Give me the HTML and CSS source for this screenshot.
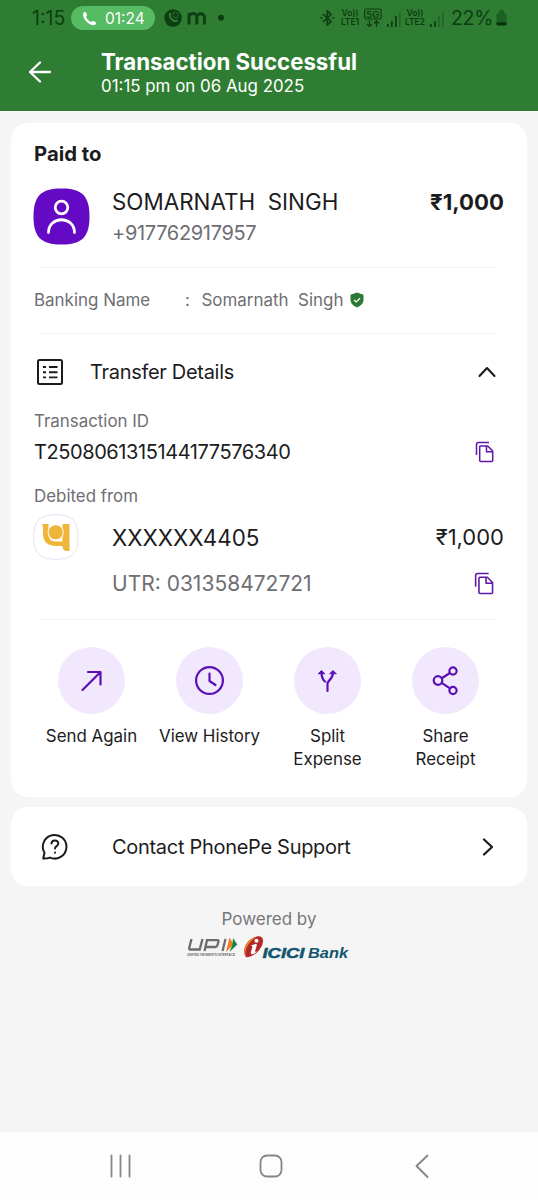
FILE: index.html
```html
<!DOCTYPE html>
<html lang="en">
<head>
<meta charset="utf-8">
<title>Transaction Successful</title>
<link rel="stylesheet" href="styles.css">
</head>
<body>
<header class="header">
  <div class="status">
    <span class="clock">1:15</span>
    <span class="call">
      <svg width="15" height="15" viewBox="0 0 15 15"><path d="M1 3.2C1 1.6 2.3.9 3.3 1c.8.1 1.6 2.5 1.7 3.3.1.7-1 1.1-.9 1.7C4.6 7.800 7.200 10.400 9 10.900c.6.1 1-1 1.700-.9.8.1 3.200 1 3.300 1.700.1 1.300-.9 2.500-2.300 2.500C6.700 14 1 8.200 1 3.200z" fill="#fff"/></svg>
      <span class="call-time">01:24</span>
    </span>
    <svg class="notif" width="62" height="20" viewBox="0 0 62 20" fill="none">
      <circle cx="9" cy="10" r="8.700" fill="#0d3d12"/>
      <path d="M5 5.500c1-1.200 2-.9 2.300.3.300 1-.8 1.300-.5 2.200.7 2 2.200 3.400 4 4 .9.200 1.200-.9 2-.5 1.200.5 1.600 1.300.5 2.200C9.500 16 3 9 5 5.500z" fill="#2e7d32"/>
      <path d="M9.500 4.500l1.500-1 1 1.200 1.500.2v1.500l1 1.100-1.200.9-.3 1.300-1.500-.2-1.400.5-.6-1.400-1-1 .8-1.200z" stroke="#2e7d32" stroke-width=".8"/>
      <path d="M25 16.500V5M25 9.500C25 4.500 32.800 4 32.800 9V16.500M32.800 9.500c0-5 7.700-5 7.700 0v7" stroke="#0d3d12" stroke-width="2.800"/>
      <circle cx="57" cy="9.800" r="3" fill="#0d3d12"/>
    </svg>
    <span class="system">
      <svg width="15" height="16" viewBox="0 0 15 16" fill="none" stroke="#0d3d12" stroke-width="1.700"><path d="M3 4l8 7.500L7.300 15V1L11 4.500 3 12"/><path d="M.5 8h2M12.300 8h2"/></svg>
      <span class="lte"><b>Vo))</b><b>LTE1</b></span>
      <svg class="fiveg" width="18" height="20" viewBox="0 0 18 20"><rect x=".7" y="1" width="16.400" height="10" rx="2" fill="none" stroke="#0d3d12" stroke-width="1.200"/><text x="8.900" y="9.500" text-anchor="middle" class="fiveg-text">5G</text><path d="M5.500 12.500v6M3 16L5.500 18.500 8 16M12.500 19v-6M10 15.500l2.500-2.500L15 15.500" fill="none" stroke="#0d3d12" stroke-width="1.300"/></svg>
      <svg class="bars" width="14" height="15" viewBox="0 0 14 15" fill="#0d3d12"><path d="M0 12h1.700v3H0zM4 9h1.700v6H4zM8 4h1.700v11H8z"/><path opacity=".35" d="M12 0h1.700v15H12z"/></svg>
      <span class="lte lte-two"><b>Vo))</b><b>LTE2</b></span>
      <svg class="bars" width="14" height="15" viewBox="0 0 14 15" fill="#0d3d12"><path d="M0 12h1.700v3H0zM4 9h1.700v6H4z"/><path opacity=".35" d="M8 4h1.700v11H8zM12 0h1.700v15H12z"/></svg>
      <span class="percent">22%</span>
      <svg width="11" height="16" viewBox="0 0 11 16"><path d="M.5 5Q.5 3 3 2.800V1q0-1 2.500-1T8 1v1.800q2.500.2 2.500 2.200v8H.500z" fill="#1d6023"/><path d="M.5 12.500h10V14q0 1.500-1.500 1.500H2Q.5 15.500.5 14z" fill="#072f0a"/></svg>
    </span>
  </div>
  <div class="titlebar">
    <svg width="24" height="24" viewBox="0 0 24 24" fill="none" stroke="#fff" stroke-width="2.300" stroke-linecap="round" stroke-linejoin="round"><path d="M12 2.500L2 12l10 9.500M2 12h20"/></svg>
    <div class="titles">
      <h1 class="title">Transaction Successful</h1>
      <p class="date">01:15 pm on 06 Aug 2025</p>
    </div>
  </div>
</header>

<main class="content">
  <section class="card">
    <h2 class="paid">Paid to</h2>
    <div class="payee">
      <svg class="avatar" width="57" height="57" viewBox="0 0 57 57"><path d="M28.500.5C49 .5 56.500 8 56.500 28.500S49 56.500 28.500 56.500.5 49 .5 28.500 8 .5 28.500.5z" fill="#650ac4"/><g fill="none" stroke="#fff" stroke-width="2.800" stroke-linecap="round"><circle cx="28.500" cy="19.500" r="6.300"/><path d="M15.500 44.500c0-17 26-17 26 0"/></g></svg>
      <div class="who">
        <span class="name">SOMARNATH  SINGH</span>
        <span class="phone">+917762917957</span>
      </div>
      <strong class="amount">₹1,000</strong>
    </div>
    <div class="banking">
      <span class="bank-label">Banking Name</span>
      <span class="colon">:</span>
      <span class="bank-name">Somarnath  Singh</span>
      <svg width="14" height="16" viewBox="0 0 14 16"><path d="M7 .5l6.500 2.300v5C13.500 11.500 10.500 14 7 15.500 3.500 14 .5 11.500.5 7.800v-5z" fill="#2a7a35"/><path d="M4 7.900l2.200 2 3.800-3.600" fill="none" stroke="#fff" stroke-width="1.300"/></svg>
    </div>
    <div class="details-head">
      <svg width="28" height="28" viewBox="0 0 28 28" fill="none" stroke="#1c1c1e" stroke-width="2"><rect x="2" y="2" width="24" height="24" rx="1.500"/><path d="M7 9h3M7 14.200h3M7 19.400h3M13 9h8.500M13 14.200h8.500M13 19.400h8.500" stroke-width="1.900"/></svg>
      <span class="details-title">Transfer Details</span>
      <svg class="chev" width="20" height="12" viewBox="0 0 20 12" fill="none" stroke="#1c1c1e" stroke-width="2.100" stroke-linecap="round" stroke-linejoin="round"><path d="M2.500 10L10 2l7.500 8"/></svg>
    </div>
    <div class="label txn-label">Transaction ID</div>
    <div class="txn">
      <span class="txn-id">T2508061315144177576340</span>
      <svg class="copy" width="20" height="22" viewBox="0 0 20 22" fill="none" stroke="#6016a8" stroke-width="1.500" stroke-linejoin="round"><path d="M14 1.500H3.500q-2 0-2 2V14"/><path d="M5.500 5h7.200l5 5v9.500q0 1-1 1h-11q-1 0-1-1V6q0-1 .8-1zM11.500 5v5.700h6"/></svg>
    </div>
    <div class="label debit-label">Debited from</div>
    <div class="debit">
      <svg width="46" height="46" viewBox="0 0 46 46"><path d="M23 .7C39 .7 45 7 45 23s-6 22.300-22 22.300S.7 39 .7 23 7 .7 23 .7z" fill="#fff" stroke="#e7dcef"/><path d="M9 10h6.500v10c0 5 2.500 7.500 7.500 7.500h6.500V10h7v27H34c-3 0-4.500-1.500-4.500-5H23C14 32 10 27 10 20v-5.500c0-2-.2-3.300-1-4.500z" fill="#efb539"/><circle cx="22.700" cy="18.300" r="7.600" fill="#efb539" stroke="#fff" stroke-width="1"/></svg>
      <span class="account">XXXXXX4405</span>
      <span class="debit-amount">₹1,000</span>
    </div>
    <div class="utr">
      <span class="utr-id">UTR: 031358472721</span>
      <svg class="copy" width="21" height="23" viewBox="0 0 20 22" fill="none" stroke="#6016a8" stroke-width="1.500" stroke-linejoin="round"><path d="M14 1.500H3.500q-2 0-2 2V14"/><path d="M5.500 5h7.200l5 5v9.500q0 1-1 1h-11q-1 0-1-1V6q0-1 .8-1zM11.500 5v5.700h6"/></svg>
    </div>
    <div class="actions">
      <div class="action"><span class="circle"><svg width="34" height="34" viewBox="0 0 34 34"><path d="M8.500 26L26.500 8M14 8H26.500V20.500"/></svg></span><span class="caption">Send Again</span></div>
      <div class="action"><span class="circle"><svg width="34" height="34" viewBox="0 0 34 34"><circle cx="17.500" cy="16.500" r="13.400"/><path d="M17.500 9.500V17l6 4"/></svg></span><span class="caption">View History</span></div>
      <div class="action"><span class="circle"><svg width="34" height="34" viewBox="0 0 34 34"><path d="M17.500 27v-7.500c0-3 5.500-4 5.500-11M15 17.500c-2.500-2-3.500-4-3.500-9"/><path class="solid" d="M8.500 9.500l3-3 3 3zM20 9.500l3-3 3 3z"/></svg></span><span class="caption">Split<br>Expense</span></div>
      <div class="action"><span class="circle"><svg width="34" height="34" viewBox="0 0 34 34"><circle cx="10" cy="16.500" r="4.300"/><circle cx="25" cy="7" r="3.600"/><circle cx="25" cy="26.500" r="3.600"/><path d="M13.700 14.200l8.200-5.200M13.700 18.900l8.200 5.400"/></svg></span><span class="caption">Share<br>Receipt</span></div>
    </div>
  </section>

  <section class="card support">
    <svg width="28" height="28" viewBox="0 0 28 28" fill="none" stroke="#1c1c1e" stroke-width="2" stroke-linecap="round" stroke-linejoin="round"><path d="M2.200 25.500L3.500 19.800A11.800 11.800 0 1 1 9 24.600Q6 25.600 2.200 25.500z"/><path d="M10.500 10.500c.2-4.300 7-4 6.800 0 0 2.800-3.300 2.500-3.300 5M14 19.500v.2"/></svg>
    <span class="support-text">Contact PhonePe Support</span>
    <svg class="chev-right" width="12" height="20" viewBox="0 0 12 20" fill="none" stroke="#1c1c1e" stroke-width="2.300" stroke-linecap="round" stroke-linejoin="round"><path d="M2 2.500l8 7.500-8 7.500"/></svg>
  </section>

  <footer class="powered">
    <span class="powered-text">Powered by</span>
    <svg width="164" height="28" viewBox="0 0 164 28">
      <g fill="none" stroke="#6c6c70" stroke-width="2.300"><path d="M4.500 4L2.200 13q-.3 1.500 1 1.500h9.500L15.500 4"/><path d="M17.500 16L20 5.200h10.500q1.500 0 1 1.500L30.300 10.500q-.4 1.500-2 1.500H19"/><path d="M38.500 4L35.500 16"/></g>
      <path d="M42.500 2.500l4.300 7-7.800 7.500z" fill="#ef7d27"/><path d="M46 3l4.300 6.500-7.800 7.500 3-7.500z" fill="#168447"/>
      <text x="0" y="20.600" class="upi-sub" textLength="48" lengthAdjust="spacingAndGlyphs">UNIFIED PAYMENTS INTERFACE</text>
      <path d="M59 22C54.500 16 59 4 70 1.500c7.500-1.200 7.500 6 3 12.500-4 5.500-10 9-14 8z" fill="#b3292a"/><path d="M59 22C54.500 16 59 4 70 1.500 60 8 57.500 15 59 22z" fill="#ef7d27"/>
      <circle cx="69.500" cy="5.800" r="2" fill="#fff"/><path d="M64 10.500q4-2 5.500-1.500c.8.500-.5 4-1.500 7.500 0 1 1 0 1.800-.2-2 3.200-6.300 4.200-6 1.200l1.700-6z" fill="#fff"/>
      <text x="75.500" y="23" class="icici" textLength="42" lengthAdjust="spacingAndGlyphs">ICICI</text>
      <text x="121" y="23" class="icici bank" textLength="40" lengthAdjust="spacingAndGlyphs">Bank</text>
    </svg>
  </footer>
</main>

<nav class="nav">
  <svg width="24" height="24" viewBox="0 0 24 24"><path d="M2.500 1.500v21M11.500 1.500v21M20.500 1.500v21"/></svg>
  <svg width="24" height="24" viewBox="0 0 24 24"><rect x="1.500" y="1.500" width="21" height="21" rx="6.500"/></svg>
  <svg width="24" height="24" viewBox="0 0 24 24"><path d="M17.500 1.500L6.500 12l11 11"/></svg>
</nav>
</body>
</html>
```
FILE: styles.css
```css
* { box-sizing: border-box; }
body { margin: 0; width: 538px; height: 1200px; display: flex; flex-direction: column; background: #f5f5f5; color: #1c1c1e; font-family: Inter, "Noto Sans", sans-serif; overflow: hidden; }
h1, h2, p { margin: 0; }
svg { display: block; flex: none; }
span { white-space: pre; }

.header { height: 111px; background: #2e7d32; flex: none; }
.status { height: 36px; display: flex; align-items: center; padding-left: 32px; color: #0d3d12; }
.clock { width: 39px; font-size: 19.500px; }
.call { display: flex; align-items: center; gap: 8px; width: 84px; height: 24px; padding-left: 11px; border-radius: 12px; background: #57bb63; color: #fff; }
.call-time { font-size: 15.500px; }
.notif { margin-left: 9px; }
.system { display: flex; align-items: center; margin-left: auto; padding-right: 31px; }
.system > svg:first-child { margin-right: 3px; }
.lte { display: grid; justify-content: center; width: 20px; margin-left: 2px; line-height: 9px; font-size: 8.700px; text-align: center; letter-spacing: -.2px; }
.lte-two { margin-left: 4px; }
.lte b { font-weight: 600; }
.fiveg { margin-left: 4px; }
.fiveg-text { font: 600 9.500px Inter, sans-serif; fill: #0d3d12; }
.bars { margin: 2px 0 0 5px; }
.percent { margin: 0 3px 0 7px; font-size: 19.500px; letter-spacing: -.3px; }
.titlebar { display: flex; padding: 13px 0 0 28px; }
.titlebar > svg { margin-top: 11px; }
.titles { margin-left: 49px; }
.title { font-size: 22.250px; line-height: 26px; font-weight: 700; color: #fff; white-space: nowrap; }
.date { font-size: 16.900px; line-height: 22px; color: #fff; white-space: nowrap; }

.content { flex: 1; padding: 12px 11px 0; }
.card { background: #fff; border-radius: 17px; padding: 0 23px; }
.paid { padding-top: 18px; font-size: 20.300px; line-height: 26px; font-weight: 700; }
.payee { display: flex; margin-top: 21px; height: 57px; }
.avatar { margin-left: -1px; }
.who { display: grid; margin: -2px 0 0 22px; grid-template-rows: 32px 30px; line-height: 31px; }
.name { font-size: 22.400px; }
.phone { font-size: 20px; letter-spacing: -.33px; color: #6e6e73; }
.amount { margin: -2px 0 0 auto; font-size: 22.200px; line-height: 31px; font-weight: 700; }
.banking { display: flex; align-items: center; height: 67px; margin-top: 22px; padding-bottom: 2px; border-block: 1px solid #f3f3f3; margin-inline: 6px 8px; font-size: 16.950px; color: #6e6e73; }
.bank-label { margin-left: -6px; width: 151px; }
.colon { width: 16.500px; }
.banking > svg { margin-left: 6px; }
.details-head { display: flex; align-items: center; height: 76px; padding-left: 2px; }
.details-title { margin-left: 26px; font-size: 20px; letter-spacing: -.3px; }
.chev { margin-left: auto; margin-right: 7px; }
.label { margin-top: -1px; font-size: 16.900px; line-height: 24px; color: #6e6e73; }
.txn { display: flex; align-items: center; justify-content: space-between; height: 37px; }
.txn-id { font-size: 20px; letter-spacing: -.42px; }
.copy { margin-right: 9px; }
.debit-label { margin-top: 14px; }
.debit { display: flex; align-items: center; height: 46px; margin: 6px 0 0 -1px; }
.account { margin-left: 33px; font-size: 22.400px; }
.debit-amount { margin-left: auto; font-size: 22px; }
.utr { display: flex; align-items: center; justify-content: space-between; height: 47px; padding-left: 78px; color: #6e6e73; }
.utr-id { font-size: 21px; }
.actions { display: grid; grid-template-columns: repeat(4, 118px); margin: 12px 0 0 -2px; padding: 28px 0 26px; background: linear-gradient(#f3f3f3, #f3f3f3) 8px 0 / 456px 1px no-repeat; }
.action { display: flex; flex-direction: column; align-items: center; text-align: center; font-size: 16.900px; line-height: 23px; }
.caption { padding-left: 1px; }
.circle { display: grid; place-items: center; width: 67px; height: 67px; margin-bottom: 11px; border-radius: 50%; background: #f2e8fd; }
.circle svg { fill: none; stroke: #5b10b5; stroke-width: 2.200; stroke-linecap: round; stroke-linejoin: round; }
.circle .solid { fill: #5b10b5; stroke-width: 1; }
.support { display: flex; align-items: center; height: 79px; margin-top: 10px; padding-left: 30px; }
.support-text { margin-left: 43px; font-size: 20px; letter-spacing: -.3px; }
.chev-right { margin-left: auto; margin-right: 10px; }
.powered { display: flex; flex-direction: column; align-items: center; padding-top: 22px; }
.powered-text { font-size: 17px; line-height: 22px; color: #77777b; }
.powered svg { margin-top: 5px; }
.upi-sub { font: 700 4px "Liberation Sans", sans-serif; fill: #6c6c70; }
.icici { font: italic 700 15px "Liberation Sans", sans-serif; fill: #11566e; stroke: #11566e; stroke-width: .5px; }
.bank { stroke-width: 0; }

.nav { display: flex; justify-content: space-between; height: 68px; padding: 22px 104px 0 109px; background: #fdfdfd; }
.nav svg { fill: none; stroke: #858585; stroke-width: 1.800; stroke-linecap: round; stroke-linejoin: round; }
.nav svg:nth-child(2) { margin-right: 2px; }
```
